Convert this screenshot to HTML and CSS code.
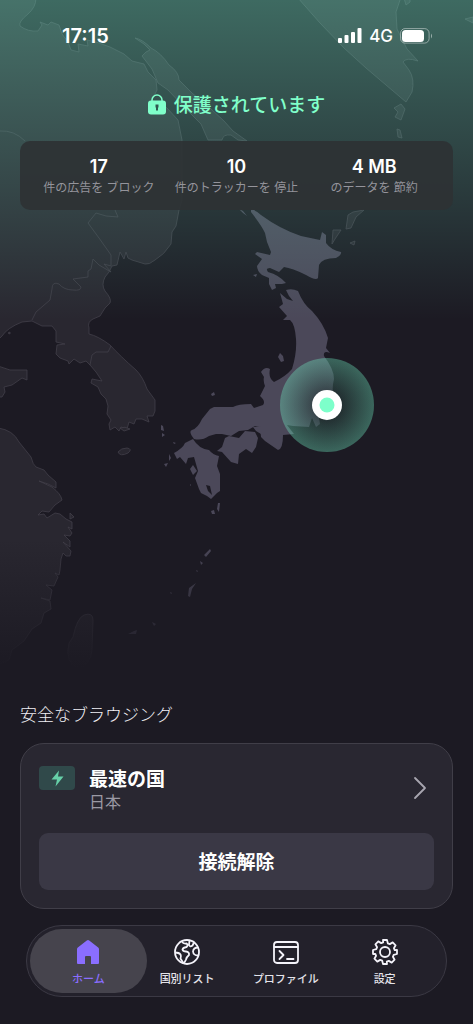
FILE: index.html
```html
<!DOCTYPE html>
<html lang="ja">
<head>
<meta charset="utf-8">
<meta name="viewport" content="width=device-width, initial-scale=1">
<title>VPN</title>
<link rel="stylesheet" href="styles.css">
</head>
<body>
<div class="app">
  <svg class="map" viewBox="0 0 473 700" aria-hidden="true">
    <defs>
      <linearGradient id="glow" x1="0" y1="0" x2="0" y2="1">
        <stop offset="0" stop-color="#7dffd5" stop-opacity=".35"/>
        <stop offset=".75" stop-color="#7dffd5" stop-opacity=".09"/>
        <stop offset="1" stop-color="#7dffd5" stop-opacity="0"/>
      </linearGradient>
      <linearGradient id="fade" x1="0" y1="0" x2="0" y2="1">
        <stop offset="0" stop-color="#1c1a23" stop-opacity="0"/>
        <stop offset=".8" stop-color="#1c1a23"/>
      </linearGradient>
      <radialGradient id="halo">
        <stop offset="0" stop-color="#72efc4" stop-opacity="0"/>
        <stop offset="1" stop-color="#72efc4" stop-opacity=".36"/>
      </radialGradient>
      <radialGradient id="shade">
        <stop offset=".25" stop-color="#15141b" stop-opacity=".5"/>
        <stop offset="1" stop-color="#15141b" stop-opacity="0"/>
      </radialGradient>
    </defs>
    <g class="land">
      <path d="M-2-2H36Q36 7 28 14Q18 22 20 26Q28 32 38 31L42 25 40 22 48 25 51 22 59 25 62 34 68 42 71 50 79 52 78 44 88 46 87 40 96 42 110 47 124 54 132 61 144 64 148 72 156 80 157 90 152 100 167 108 178 120 182 140V200L179 210 176 226 172 232 171 244Q164 255 155 260Q149 265 145 264L132 260 128 258 126 252 124 259 120 252 117 265 112 266 109 272 105 277Q101 285 105 291Q112 299 110 303L105 308 100 316 93 319Q87 322 89 328L89 334Q98 336 110 345Q120 356 136 370Q143 377 147 389L155 400 155 411 153 416 147 416 149 422 142 419 136 419 134 424 129 422 127 429 121 427 119 431 115 427 110 430 109 424 111 420 107 414 108 406 106 399 101 394 98 387 91 383 92 379 102 381 96 372 90 365 86 361 80 363 74 359 69 364 68 361 60 358 56 354 57 345 65 344 56 342 56 331 52 326 42 326 32 321 22 322Q7 328 2 336L-2 340Z"/>
      <path d="M-2 366L10 370 27 370 27 380 22 378 12 385 4 387 5 392 2 397-2 397Z"/>
      <path d="M-2 428Q13 430 19 442L31 457Q33 465 36 467L44 470 48 475 56 482 56 488 48 484 39 481 52 487Q61 494 62 500L55 505 49 512 42 511 38 515 44 514 47 518 55 513 60 514 66 519 72 522 72 529 68 527 72 533 70 536 64 535 70 541 70 547 63 542 71 551 70 556 66 556 63 553 61 559 60 570 59 575 55 573 58 577 54 586 46 585 52 590 50 600 41 598 50 601 51 609 44 613 41 623 32 629 24 641 12 650 9 660-2 665Z"/>
      <path d="M135 38Q142 39 151 48Q161 53 169 65Q179 72 179 80L192 93 210 108 224 121 233 131 247 141 238 140 231 135Q223 134 222 140L208 140 201 124 185 108 168 90 158 83 152 69 142 56 146 52 150 50 144 44Z"/>
      <path d="M298-2L320 23 344 48 366 68 386 85 406 102 412 92Q415 79 409 70L403 62Q406 57 418 61L407 49 397 29 396 12 400 0V-2ZM404-2 406 5 410 2V-2ZM465 19 473 17V23ZM394 108 401 104 405 109 401 120 395 117 398 112ZM397 129 400 130 402 138 398 137ZM348 215 353 212 364 210 356 217 351 228 346 229ZM333 230 341 230 335 239 332 244ZM350 243 355 241 354 245Z"/>
      <path d="M118 452Q121 448 127 448Q133 449 128 453Q120 457 118 452ZM120 428Q125 426 130 429L124 431ZM70 513 74 517 70 519ZM73 637Q77 618 84 615Q93 612 93 620L92 650Q91 663 79 669Q64 663 69 643ZM8 333 10 332 10 334Z"/>
      <path d="M0 131Q14 130 25 141M118 217 115 210M96 213Q105 217 118 217M96 213 88 223 99 238 111 255 111 266 104 264 111 272 99 265 93 259 91 269 88 271 88 277 73 279 81 287Q81 291 73 290Q64 290 59 284Q52 281 52 289L50 300 36 312 32 320M90 365 92 355 96 352 108 352 111 346" fill="none"/>
    </g>
    <g class="japan">
      <path d="M251 210Q255 209 261 215Q280 229 301 236L320 240 322 232 326 235 326 243Q331 250 341 252Q342 255 336 258Q322 258 319 265L318 278Q316 281 306 275Q292 268 284 267L279 272 270 268Q265 268 268 272Q279 275 286 283L282 284 275 284 276 288 272 290 269 284 269 278 262 275Q257 271 257 266L262 259 255 254 257 252 270 255 271 252 267 242 265 233Q262 226 251 212ZM239 209 243 213 247 216 243 211ZM253 275 257 274 256 277Z"/>
      <path d="M286 290Q292 288 298 291Q303 304 312 311Q324 324 328 338L326 348 330 353Q323 350 324 356Q334 369 334 379Q331 391 335 400L342 405 333 413 326 421 324 417 319 418 320 424 316 427 312 418 309 427 293 426 287 425 294 434 283 435Q283 449 278 450L265 441 261 437 260 427 255 426 248 430 239 431 231 436 222 434 216 434 209 436Q202 441 194 439Q188 431 192 430Q198 428 202 419L210 409 214 407 233 407Q238 404 251 404L254 408 263 405Q266 401 260 396L265 386Q263 381 264 377L261 372Q265 366 270 369Q268 378 274 382Q285 377 292 369Q297 353 296 339Q295 324 290 320L283 320 287 316 279 307 283 304 280 293 287 299 293 301 289 296Z"/>
      <path d="M217 451 222 447 225 438 229 436 239 438 245 431 255 432 258 438 256 447 252 453 246 449 239 454 238 464 231 462 222 452ZM253 427 261 426 261 434 256 431Z"/>
      <path fill-rule="evenodd" d="M174 453Q183 448 185 443L193 439Q199 449 209 450Q213 455 219 456L217 466 220 474 220 491 217 493 211 499 207 496 201 493 199 489 195 478 198 471 194 457 188 458 186 464 180 457 177 459ZM206 485 208 491 212 495 210 486ZM190 469 193 465 197 471 193 475ZM280 353 283 356 284 361 281 362 278 357ZM211 394 214 392 215 395 212 396ZM161 425 163 426 164 431 161 430ZM162 433 165 435 162 437ZM169 454 171 458 169 461ZM164 464 168 463 166 467ZM218 503 220 503 219 512 217 509ZM211 511 214 510 215 514 212 514ZM190 484 191 485 190 486ZM173 442 176 443 174 444Z"/>
      <path d="M204 555 210 549 211 551 206 557ZM200 561 203 563 201 565ZM196 570 198 571 197 572ZM188 596 189 588 196 583 192 589 190 597ZM170 592 172 593 171 594ZM152 622 156 624 154 626ZM134 631 137 630 136 634 128 634Z"/>
    </g>
    <rect width="473" height="320" fill="url(#glow)"/>
    <rect y="540" width="473" height="160" fill="url(#fade)"/>
    <circle cx="327" cy="405" r="47" fill="url(#shade)"/>
    <circle cx="327" cy="405" r="47" fill="url(#halo)"/>
    <circle cx="327" cy="405" r="15" fill="#fff"/>
    <circle cx="327" cy="405" r="7.500" fill="#7dffca"/>
  </svg>

  <div class="status-bar">
    <span class="clock">17:15</span>
    <div class="signals">
      <svg width="24" height="16" viewBox="0 0 24 16" fill="#fff" aria-hidden="true"><rect y="10" width="4" height="5" rx="1"/><rect x="6.500" y="7" width="4" height="8" rx="1"/><rect x="13" y="4" width="4" height="11" rx="1"/><rect x="19.500" width="4" height="15" rx="1"/></svg>
      <span>4G</span>
      <svg width="33" height="16" viewBox="0 0 33 16" aria-hidden="true"><rect x=".6" y=".6" width="28.500" height="14.500" rx="4.500" fill="none" stroke="#fff" stroke-opacity=".45"/><rect x="2" y="2" width="22" height="12" rx="3.500" fill="#fff"/><path d="M31 5.500v5q2-2.500 0-5" fill="#fff" fill-opacity=".5"/></svg>
    </div>
  </div>

  <main class="content">
    <h1 class="protected">
      <svg width="18" height="21" viewBox="0 0 18 21" aria-hidden="true"><path d="M4 8V6a5 5 0 0 1 10 0v2" fill="none" stroke="#80ffca" stroke-width="1.500"/><rect y="6.500" width="18" height="14" rx="3" fill="#80ffca"/><path d="M7.500 10.500h3v3H10v3H8v-3h-.5z" fill="#315850"/></svg>
      <span>保護されています</span>
    </h1>
    <dl class="stats">
      <div><dt>件の広告を ブロック</dt><dd>17</dd></div>
      <div><dt>件のトラッカーを 停止</dt><dd>10</dd></div>
      <div><dt>のデータを 節約</dt><dd>4 MB</dd></div>
    </dl>

    <section class="browsing">
      <h2>安全なブラウジング</h2>
      <div class="card">
        <a class="country" href="#countries">
          <span class="badge"><svg width="13" height="17" viewBox="0 0 13 17" aria-hidden="true"><path d="M8 .5.500 9.500H6L4.500 16.500 12.500 6.500H7Z" fill="#66d0a8"/></svg></span>
          <span class="names"><strong>最速の国</strong><span>日本</span></span>
          <svg class="chevron" width="14" height="24" viewBox="0 0 14 24" aria-hidden="true"><path d="m2 2 10 10L2 22" fill="none" stroke="#a8a6b0" stroke-width="1.800" stroke-linecap="round" stroke-linejoin="round"/></svg>
        </a>
        <button class="disconnect" type="button">接続解除</button>
      </div>
    </section>
  </main>

  <nav class="tabs">
    <a class="active" href="#home" aria-current="page">
      <svg width="26" height="26" viewBox="0 0 26 26" aria-hidden="true"><path d="M11.800 1.400q1.200-.9 2.400 0l9 7q.8.700.8 1.800V24q0 1-1 1h-7v-7q0-1-1-1h-4q-1 0-1 1v7H3q-1 0-1-1V10.200q0-1.100.8-1.800z" fill="#8a6eff"/></svg>
      <span>ホーム</span>
    </a>
    <a href="#list">
      <svg width="26" height="26" viewBox="0 0 26 26" fill="none" stroke="#f4f3fa" stroke-width="1.800" stroke-linejoin="round" aria-hidden="true"><circle cx="13" cy="13" r="12"/><path d="M8 2.500Q9 5 12.500 4.500Q14.500 6 12.500 8Q9 8.500 8.500 10.500Q9 12.500 12 12.500Q15.500 13 15 16Q12.500 18 12 20.500Q11 23 9.500 24.500M1 13.500Q5 13.500 6.500 15.500Q7.500 17.500 6.500 19.500L9.500 24.500M15.500 1.500 15 6Q16 8.500 18.500 6.500L20 3.500M24 8.500Q19.500 8.500 19 12.500Q19.500 16.500 24 16.500"/></svg>
      <span>国別リスト</span>
    </a>
    <a href="#profiles">
      <svg width="26" height="26" viewBox="0 0 26 26" fill="none" stroke="#f4f3fa" stroke-width="1.800" stroke-linecap="round" stroke-linejoin="round" aria-hidden="true"><rect x="1" y="3" width="24" height="21" rx="3"/><path d="M1.500 8h23M6.500 12l4 4-4 4M14 20h6.500"/></svg>
      <span>プロファイル</span>
    </a>
    <a href="#settings">
      <svg width="26" height="26" viewBox="0 0 26 26" fill="none" stroke="#f4f3fa" stroke-width="1.800" stroke-linejoin="round" aria-hidden="true"><circle cx="13" cy="13" r="5"/><path d="M11 1h4l.8 3.300 2 .8 2.900-1.700 2.900 2.900-1.700 2.900.8 2L25 11v4l-3.300.8-.8 2 1.700 2.900-2.900 2.900-2.900-1.700-2 .8L15 25h-4l-.8-3.300-2-.8-2.900 1.700-2.900-2.900 1.700-2.900-.8-2L1 15v-4l3.300-.8.8-2-1.700-2.900 2.900-2.900 2.900 1.700 2-.8z"/></svg>
      <span>設定</span>
    </a>
  </nav>
</div>
</body>
</html>
```
FILE: styles.css
```css
* {
  box-sizing: border-box;
}

body {
  margin: 0;
  background: #1c1a23;
  color: #fff;
  font-family: Inter, "Noto Sans CJK JP", sans-serif;
}

h1, h2, dl, dd {
  margin: 0;
}

a {
  color: inherit;
  text-decoration: none;
}

svg {
  display: block;
  flex: none;
}

.app {
  position: relative;
  display: flex;
  flex-direction: column;
  min-height: 100vh;
  padding-bottom: 27px;
}

.map {
  position: absolute;
  top: 0;
  left: 0;
  width: 100%;
  height: auto;
}

.land {
  fill: #292730;
  stroke: #413f49;
  stroke-width: 0.8;
}

.japan {
  fill: #4b4859;
}

.status-bar,
.content,
.tabs {
  position: relative;
}

.status-bar {
  display: flex;
  align-items: center;
  justify-content: space-between;
  padding: 24px 40px 0 62px;
  line-height: 24px;
}

.clock {
  font-size: 20px;
  font-weight: 600;
}

.signals {
  display: flex;
  align-items: center;
  gap: 7px;
  font-size: 17px;
  font-weight: 500;
}

.content {
  display: flex;
  flex: 1;
  flex-direction: column;
  padding: 0 20px;
}

.protected {
  display: flex;
  align-items: center;
  justify-content: center;
  gap: 8px;
  margin-top: 40px;
  color: #80ffca;
  font-size: 19px;
  font-weight: 500;
  line-height: 28px;
}

.protected span {
  padding-top: 4px;
}

.stats {
  display: flex;
  margin-top: 21px;
  padding: 14px 10px 12px;
  border-radius: 10px;
  background: rgba(46, 50, 52, 0.92);
  text-align: center;
}

.stats div {
  display: flex;
  flex: 1;
  flex-direction: column-reverse;
}

.stats dt {
  color: #94949b;
  font-size: 12px;
  line-height: 20px;
}

.stats dd {
  font-size: 18px;
  font-weight: 600;
  line-height: 23px;
}

.browsing {
  margin-top: auto;
}

.browsing h2 {
  margin-bottom: 16px;
  color: #f0eff4;
  font-size: 17px;
  font-weight: 300;
  line-height: 24px;
}

.card {
  padding: 18px;
  border: 1px solid #403e48;
  border-radius: 24px;
  background: #292731;
}

.country {
  display: flex;
  align-items: center;
  margin-bottom: 19px;
}

.badge {
  display: grid;
  place-items: center;
  align-self: flex-start;
  width: 36px;
  height: 24px;
  margin: 4px 14px 0 0;
  border-radius: 4px;
  background: #30494a;
}

.names {
  display: flex;
  flex: 1;
  flex-direction: column;
  padding: 5px 0 3px;
  color: #9b99a4;
  font-size: 16px;
  line-height: 18px;
}

.names strong {
  color: #fff;
  font-size: 19px;
  font-weight: 700;
  line-height: 26px;
}

.chevron {
  margin-right: 7px;
}

.disconnect {
  display: block;
  width: 100%;
  padding: 15px 14px 13px;
  border: 0;
  border-radius: 9px;
  background: #3a3845;
  color: #fff;
  font: inherit;
  font-size: 19px;
  font-weight: 700;
  line-height: 29px;
}

.tabs {
  display: flex;
  margin: 16px 26px 0;
  padding: 3px 12px;
  border: 1px solid #3b3944;
  border-radius: 37px;
  background: #23212b;
}

.tabs a {
  position: relative;
  display: flex;
  flex: 1;
  flex-direction: column;
  align-items: center;
  gap: 5px;
  padding: 10px 0 5px;
  color: #e4e3ea;
  font-size: 11px;
  font-weight: 500;
  line-height: 18px;
}

.tabs a > * {
  position: relative;
}

.tabs .active {
  color: #8a6eff;
}

.tabs .active::before {
  content: "";
  position: absolute;
  inset: 0 -9px;
  border-radius: 32px;
  background: #46444d;
}
```
